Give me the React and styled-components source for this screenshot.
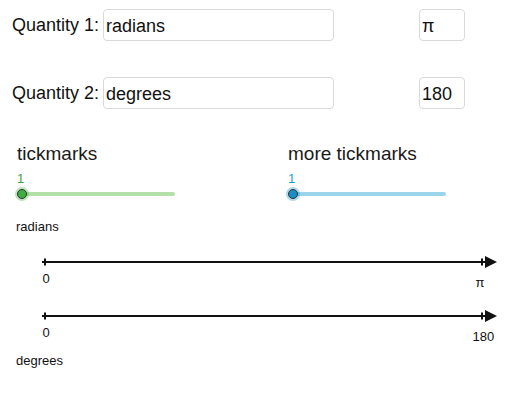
import styled, { createGlobalStyle } from "styled-components";

const GlobalStyle = createGlobalStyle`
  body {
    margin: 0;
    background: #ffffff;
    font-family: "Liberation Sans", Arial, sans-serif;
    color: #111;
  }
`;

const Page = styled.div`
  width: 512px;
  height: 404px;
  padding-top: 9px;
  box-sizing: border-box;
  overflow: hidden;
`;

const QuantityRow = styled.div`
  display: flex;
  align-items: center;
  height: 32px;
  padding-left: 12px;
  margin-bottom: ${(p) => p.$gap || 0}px;
`;

const QuantityLabel = styled.span`
  width: 91px;
  font-size: 18px;
  white-space: nowrap;
`;

const Field = styled.div`
  box-sizing: border-box;
  height: 32px;
  width: ${(p) => p.$width}px;
  margin-left: ${(p) => p.$offset || 0}px;
  padding: 2px 2px 0;
  border: 1px solid #d9d9d9;
  border-radius: 4px;
  font-size: 18px;
  display: flex;
  align-items: center;
  background: #fff;
`;

const Sliders = styled.div`
  display: flex;
  padding-left: 17px;
  margin-top: 34px;
`;

const SliderBlock = styled.div`
  width: ${(p) => p.$width}px;
`;

const SliderTitle = styled.div`
  font-size: 19px;
  line-height: 22px;
  color: #1a1a1a;
`;

const SliderValue = styled.div`
  font-size: 13px;
  line-height: 15px;
  margin-top: 6px;
  color: ${(p) => p.$color};
`;

const SliderTrack = styled.div`
  position: relative;
  margin-left: 5px;
  margin-top: 6px;
  width: 153px;
  height: 4px;
  border-radius: 2px;
  background: ${(p) => p.$color};
  margin-bottom: 6px;
`;

const Thumb = styled.div`
  position: absolute;
  left: -5px;
  top: -3px;
  width: 10px;
  height: 10px;
  box-sizing: border-box;
  border-radius: 50%;
  background: ${(p) => p.$fill};
  border: 1px solid #333;
  box-shadow: 0 0 0 2px ${(p) => p.$halo};
`;

const AxisName = styled.div`
  font-size: 13px;
  line-height: 15px;
  padding-left: 16px;
  margin-top: ${(p) => p.$top || 0}px;
`;

const LineSvg = styled.svg`
  display: block;
`;

function NumberLine({ end }) {
  const y = 28;
  return (
    <LineSvg width="512" height="54" viewBox="0 0 512 54">
      <line x1="42" y1={y} x2="488" y2={y} stroke="#111" strokeWidth="2" />
      <line x1="45" y1={y - 3.5} x2="45" y2={y + 3.5} stroke="#111" strokeWidth="2" />
      <line x1="482" y1={y - 3.5} x2="482" y2={y + 3.5} stroke="#111" strokeWidth="2" />
      <polygon points={`485,${y - 6} 497,${y} 485,${y + 6}`} fill="#111" />
      <text x="42.5" y={y + 21} fontSize="13" fontFamily="Liberation Sans, Arial, sans-serif" fill="#111">
        0
      </text>
      <text
        x={end === "π" ? 475.5 : 472.5}
        y={y + 24.5}
        fontSize="13"
        fontFamily="Liberation Sans, Arial, sans-serif"
        fill="#111"
      >
        {end}
      </text>
    </LineSvg>
  );
}

function Slider({ title, width, color, track, fill, halo }) {
  return (
    <SliderBlock $width={width}>
      <SliderTitle>{title}</SliderTitle>
      <SliderValue $color={color}>1</SliderValue>
      <SliderTrack $color={track}>
        <Thumb $fill={fill} $halo={halo} />
      </SliderTrack>
    </SliderBlock>
  );
}

export default function App() {
  return (
    <Page>
      <GlobalStyle />
      <QuantityRow $gap={36}>
        <QuantityLabel>Quantity 1:</QuantityLabel>
        <Field $width={231}>radians</Field>
        <Field $width={46} $offset={85}>π</Field>
      </QuantityRow>
      <QuantityRow>
        <QuantityLabel>Quantity 2:</QuantityLabel>
        <Field $width={231}>degrees</Field>
        <Field $width={46} $offset={85}>180</Field>
      </QuantityRow>
      <Sliders>
        <Slider
          title="tickmarks"
          width={271}
          color="#3ba43b"
          track="#b3e0a8"
          fill="#3fae3f"
          halo="rgba(63,174,63,0.35)"
        />
        <Slider
          title="more tickmarks"
          width={200}
          color="#1c9fd6"
          track="#9ad5ec"
          fill="#1a8ec4"
          halo="rgba(26,142,196,0.35)"
        />
      </Sliders>
      <AxisName $top={17}>radians</AxisName>
      <NumberLine end="π" />
      <NumberLine end="180" />
      <AxisName $top={11}>degrees</AxisName>
    </Page>
  );
}
